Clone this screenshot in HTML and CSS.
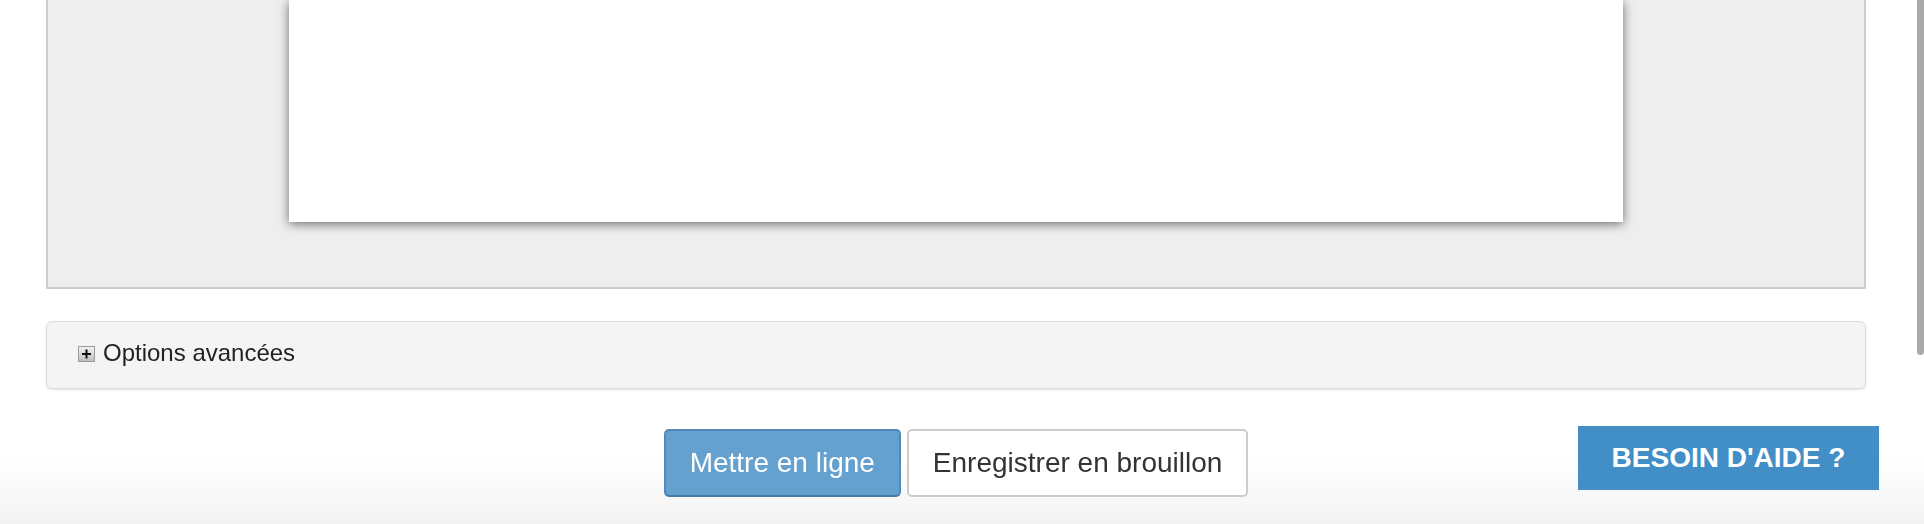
FILE: index.html
```html
<!DOCTYPE html>
<html lang="fr">

<head>
    <meta charset="UTF-8">
    <meta name="viewport" content="width=device-width, initial-scale=1.0">
    <title>Nouvelle page</title>
    <link rel="stylesheet" href="styles.css">
</head>

<body>

    <div class="wrapper">
        <div class="editor-area">
            <div class="page"></div>
        </div>

        <div class="options-panel">
            <svg class="toggle-icon" width="17" height="16" viewBox="0 0 17 16">
                <defs>
                    <linearGradient id="plusBg" x1="0" y1="0" x2="0" y2="1">
                        <stop offset="0" stop-color="#f4f4f4" />
                        <stop offset="1" stop-color="#bdbdbd" />
                    </linearGradient>
                </defs>
                <rect x="0.5" y="0.5" width="16" height="15" fill="url(#plusBg)" stroke="#9a9a9a" />
                <rect x="4" y="7" width="9" height="2" fill="#111" />
                <rect x="7.5" y="3.5" width="2" height="9" fill="#111" />
            </svg>
            <span>Options avancées</span>
        </div>

        <div class="actions">
            <button class="btn btn-primary">Mettre en ligne</button>
            <button class="btn btn-default">Enregistrer en brouillon</button>
        </div>
    </div>

    <div class="bottom-fade"></div>
    <a href="#" class="help-button">BESOIN D'AIDE ?</a>
    <div class="scroll-thumb"></div>

</body>

</html>
```

FILE: styles.css
```css
body {
    margin: 0;
    font-family: "Liberation Sans", Arial, sans-serif;
    background-color: #fff;
    overflow: hidden;
}

.wrapper {
    padding: 0 58px 0 46px;
}

.editor-area {
    background-color: #eeeeee;
    border: 2px solid #cccccc;
    border-top: none;
    padding: 0 0 65px;
    display: flex;
    justify-content: center;
}

.page {
    width: 1334px;
    height: 222px;
    background-color: #fff;
    box-shadow: 0 2px 10px rgba(0, 0, 0, 0.55);
}

.options-panel {
    margin-top: 32px;
    box-sizing: border-box;
    height: 68px;
    padding: 0 0 4px 31px;
    display: flex;
    align-items: center;
    gap: 8px;
    background-color: #f4f4f4;
    border: 1px solid #dddddd;
    border-radius: 6px;
    box-shadow: 0 1px 2px rgba(0, 0, 0, 0.12);
    font-size: 24px;
    color: #222;
}

.toggle-icon {
    flex-shrink: 0;
    margin-top: 2px;
}

.actions {
    display: flex;
    justify-content: center;
    gap: 6px;
    margin-top: 40px;
}

.btn {
    height: 68px;
    padding: 0 24px;
    font-family: "Liberation Sans", Arial, sans-serif;
    font-size: 28px;
    border-radius: 5px;
    cursor: pointer;
}

.btn-primary {
    background-color: #65a1cf;
    color: #fff;
    border: 2px solid #5189b8;
    border-bottom-color: #4a7ba6;
}

.btn-default {
    background-color: #fff;
    color: #333;
    border: 2px solid #cccccc;
}

.bottom-fade {
    position: fixed;
    left: 0;
    right: 0;
    bottom: 0;
    height: 70px;
    background: linear-gradient(to bottom, rgba(244, 244, 244, 0), #f3f3f3);
    z-index: -1;
}

.help-button {
    position: fixed;
    right: 45px;
    bottom: 34px;
    width: 301px;
    height: 64px;
    display: flex;
    align-items: center;
    justify-content: center;
    background-color: #418fc6;
    color: #fff;
    font-size: 28px;
    font-weight: bold;
    text-decoration: none;
}

.scroll-thumb {
    position: fixed;
    top: 0;
    right: 0;
    width: 7px;
    height: 355px;
    background-color: #a9a9a9;
    border-radius: 0 0 4px 4px;
}
```
